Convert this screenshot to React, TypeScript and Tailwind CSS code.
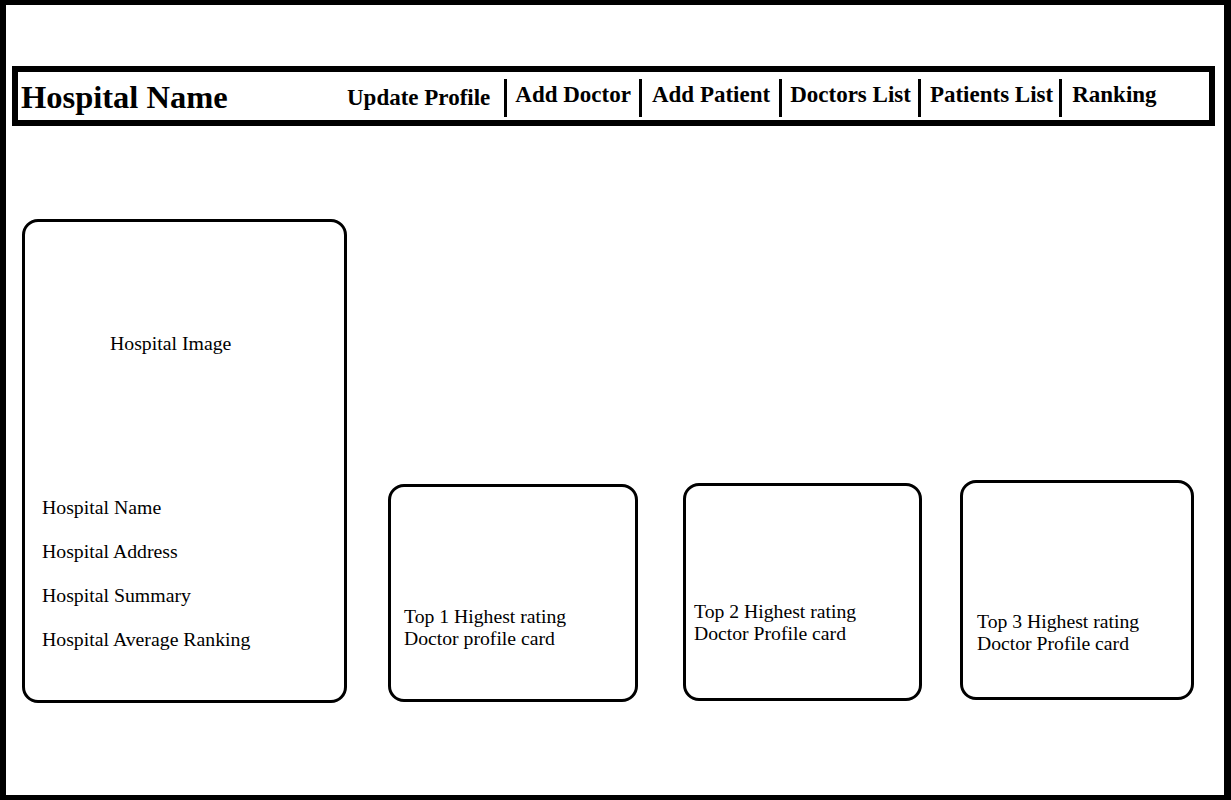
const navItems = [
  { label: 'Add Doctor', before: 'ml-[8px]', after: 'ml-[8px]' },
  { label: 'Add Patient', before: 'ml-[10px]', after: 'ml-[9px]' },
  { label: 'Doctors List', before: 'ml-[8px]', after: 'ml-[7px]' },
  { label: 'Patients List', before: 'ml-[9px]', after: 'ml-[6px]' },
  { label: 'Ranking', before: 'ml-[10px]', after: '' },
]

const doctorCards = [
  { lines: ['Top 1 Highest rating', 'Doctor profile card'], box: 'ml-[41px] mt-[265px] w-[250px] h-[218px]', text: 'pl-[13px] mt-[118px]' },
  { lines: ['Top 2 Highest rating', 'Doctor Profile card'], box: 'ml-[45px] mt-[264px] w-[239px] h-[218px]', text: 'pl-[8px] mt-[114px]' },
  { lines: ['Top 3 Highest rating', 'Doctor Profile card'], box: 'ml-[38px] mt-[261px] w-[234px] h-[220px]', text: 'pl-[14px] mt-[127px]' },
]

function Separator() {
  return <span className="mt-[7px] h-[38px] w-[3px] shrink-0 bg-black" />
}

function App() {
  return (
    <div className="w-[1231px] h-[800px] bg-white text-black border-black border-t-[5px] border-l-[6px] border-r-[7px] border-b-[5px] font-['Liberation_Serif',serif] overflow-hidden">
      {/* Header */}
      <header className="ml-[6px] mt-[61px] w-[1203px] h-[60px] border-[6px] border-black flex items-start">
        <h1 className="ml-[3px] mt-[9px] w-[326px] shrink-0 text-[32.5px] leading-[33px] font-bold whitespace-nowrap">
          Hospital Name
        </h1>
        <span className="mt-[14px] text-[23px] leading-[23px] font-bold whitespace-nowrap">Update Profile</span>
        <span className="ml-[14px] flex items-start">
          <Separator />
        </span>
        {navItems.map((item) => (
          <span key={item.label} className="flex items-start">
            <span className={`${item.before} mt-[11px] text-[23px] leading-[23px] font-bold whitespace-nowrap`}>
              {item.label}
            </span>
            {item.after && (
              <span className={`${item.after} flex items-start`}>
                <Separator />
              </span>
            )}
          </span>
        ))}
      </header>

      {/* Main content */}
      <main className="mt-[93px] flex items-start">
        {/* Hospital card */}
        <div className="ml-[16px] w-[325px] h-[484px] shrink-0 border-[3px] border-black rounded-[16px] text-[19.8px] leading-[22px]">
          <p className="pl-[85px] mt-[110px]">Hospital Image</p>
          <div className="pl-[17px] mt-[142px] flex flex-col gap-[22px]">
            <p>Hospital Name</p>
            <p>Hospital Address</p>
            <p>Hospital Summary</p>
            <p>Hospital Average Ranking</p>
          </div>
        </div>

        {/* Top doctor cards */}
        {doctorCards.map((card, i) => (
          <div key={i} className={`${card.box} shrink-0 border-[3px] border-black rounded-[16px] text-[19.7px] leading-[22px]`}>
            <div className={card.text}>
              {card.lines.map((line) => (
                <p key={line} className="whitespace-nowrap">{line}</p>
              ))}
            </div>
          </div>
        ))}
      </main>
    </div>
  )
}

export default App
